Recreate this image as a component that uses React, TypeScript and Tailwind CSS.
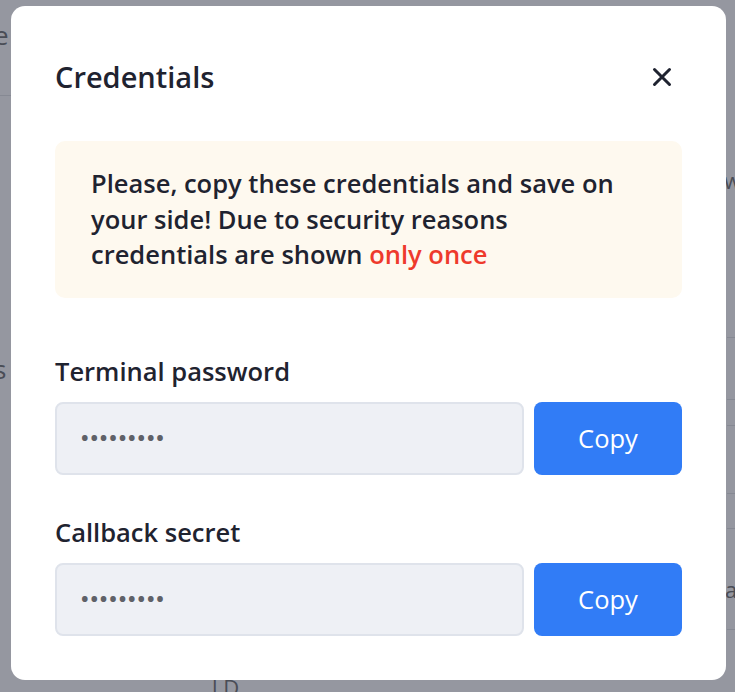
import React from "react";

type Field = {
  label: string;
  value: string;
};

const fields: Field[] = [
  { label: "Terminal password", value: "•••••••••" },
  { label: "Callback secret", value: "•••••••••" },
];

const CloseIcon = () => (
  <svg width="20" height="20" viewBox="0 0 20 20" fill="none">
    <path d="M2.5 2.5L17.5 17.5M17.5 2.5L2.5 17.5" stroke="#1f2330" strokeWidth="3" strokeLinecap="round" />
  </svg>
);

const CredentialField = ({ label, value }: Field) => (
  <div className="flex flex-col">
    <label className="text-[25.5px] leading-[32px] font-semibold text-[#1f2330]">{label}</label>
    <div className="flex gap-[10px] mt-[15px]">
      <div className="flex-1 h-[73px] flex items-center px-[24px] rounded-[8px] bg-[#eef0f5] border-2 border-[#dfe3eb] text-[#5f6168] text-[20px] font-bold tracking-[1.9px]">
        {value}
      </div>
      <button className="w-[148px] h-[73px] rounded-[8px] bg-[#317cf6] text-white text-[25.5px]">Copy</button>
    </div>
  </div>
);

// faint page content showing through the backdrop
const PageBehind = () => (
  <div className="absolute inset-0 flex justify-between text-[#4a4d56]">
    <div className="w-[12px] flex flex-col">
      <span className="mt-[18px] ml-[-6px] text-[26px] leading-[34px]">e</span>
      <div className="mt-[43px] h-px bg-[#868993]" />
      <span className="mt-[256px] ml-[-6px] text-[26px] leading-[34px]">s</span>
    </div>
    <div className="w-[8px] flex flex-col">
      <span className="mt-[165px] ml-[-3px] text-[22px] leading-[30px]">w</span>
      <div className="mt-[142px] h-px bg-[#868993]" />
      <div className="mt-[61px] h-px bg-[#868993]" />
      <div className="mt-[25px] h-px bg-[#868993]" />
      <div className="mt-[67px] h-px bg-[#868993]" />
      <div className="mt-[34px] h-px bg-[#868993]" />
      <span className="mt-[45px] ml-[-2px] text-[22px] leading-[30px]">a</span>
      <div className="mt-[25px] h-px bg-[#868993]" />
    </div>
  </div>
);

export default function App() {
  return (
    <div
      className="relative h-[692px] w-full overflow-hidden bg-[#9597a0]"
      style={{ fontFamily: '"Open Sans", "Noto Sans", sans-serif' }}
    >
      <PageBehind />

      <div className="relative ml-[11px] mt-[6px] w-[715px] h-[674px] rounded-[14px] bg-white px-[44px] pt-[52px]">
        <div className="flex items-center justify-between">
          <h2 className="text-[29px] leading-[38px] font-semibold text-[#1f2330]">Credentials</h2>
          <button className="mr-[10px]">
            <CloseIcon />
          </button>
        </div>

        <div className="mt-[45px] rounded-[10px] bg-[#fef9ef] px-[36px] py-[25px] text-[25.5px] leading-[35.5px] font-semibold text-[#1f2330]">
          Please, copy these credentials and save on your side! Due to security reasons credentials are shown{" "}
          <span className="text-[#ee3a2c]">only once</span>
        </div>

        <div className="mt-[57px] flex flex-col gap-[41px]">
          {fields.map((f) => (
            <CredentialField key={f.label} {...f} />
          ))}
        </div>
      </div>
      <div className="flex">
        <span className="ml-[212px] mt-[-8px] text-[22px] leading-[30px] text-[#4a4d56]">l D</span>
      </div>
    </div>
  );
}
